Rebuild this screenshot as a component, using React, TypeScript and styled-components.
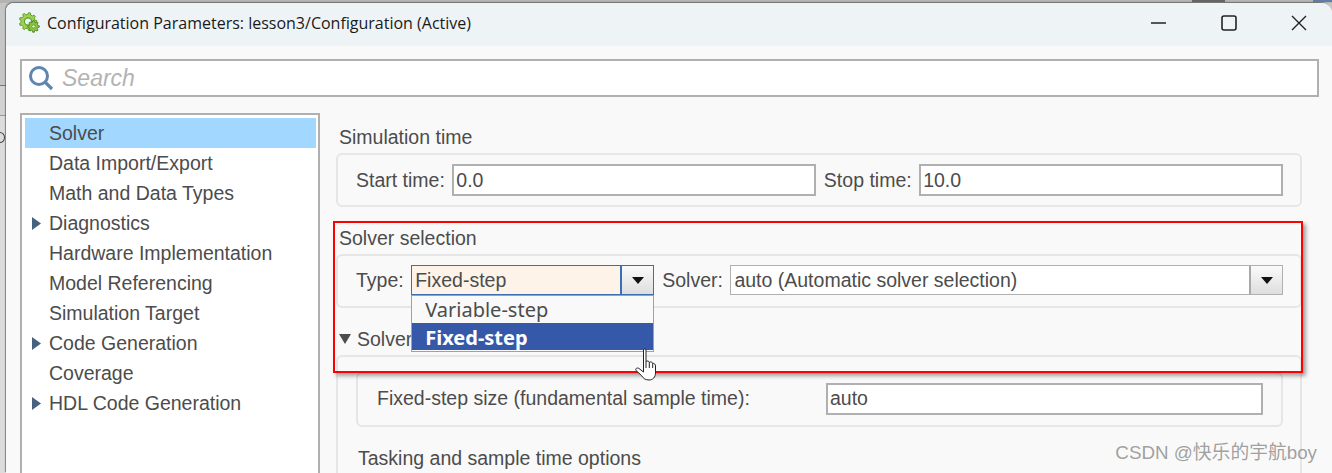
import React from 'react';
import styled, { createGlobalStyle } from 'styled-components';

const Global = createGlobalStyle`
  html, body {
    margin: 0;
    padding: 0;
    height: 473px;
    overflow: hidden;
    background: #c9c9c9;
    font-family: "Liberation Sans", Arial, sans-serif;
  }
`;

const Desktop = styled.div`
  position: relative;
  width: 1332px;
  height: 473px;
  overflow: hidden;
  padding: 3px 0 0 6px;
  box-sizing: border-box;
  background:
    linear-gradient(#666, #666) 1192px 0 / 33px 2px no-repeat,
    linear-gradient(#5f7fa8, #5f7fa8) 1313px 0 / 19px 2px no-repeat,
    linear-gradient(#777, #777) 0 85px / 6px 1px no-repeat,
    linear-gradient(#999, #999) 0 115px / 6px 1px no-repeat,
    linear-gradient(#dcdcdc, #dcdcdc) 0 116px / 6px 357px no-repeat,
    linear-gradient(#d2d2d2, #d2d2d2) 0 86px / 6px 29px no-repeat,
    linear-gradient(#b4b4b4 3px, #c6c6c6 3px);
`;

const BackdropRing = styled.span`
  position: absolute;
  left: -5px;
  top: 132px;
  width: 8px;
  height: 9px;
  border: 1.5px solid #444;
  border-radius: 50%;
`;

const Window = styled.div`
  position: relative;
  height: 470px;
  background: #f9f9f9;
  border-top-left-radius: 8px;
  border-top-right-radius: 10px;
  box-shadow: -1px -1px 1px rgba(70, 70, 70, 0.6);
  overflow: hidden;
`;

const TitleBar = styled.div`
  display: flex;
  align-items: center;
  height: 43px;
  box-sizing: border-box;
  padding: 0 0 4px 13px;
  background: #eef3f6;
`;

const Title = styled.div`
  margin-left: 7px;
  font-family: "Open Sans", sans-serif;
  font-size: 16px;
  color: #1a1a1a;
  flex: 1;
`;

const WinButtons = styled.div`
  display: flex;
  align-items: center;
  margin-right: -2px;
`;

const WinButton = styled.div`
  display: flex;
  justify-content: center;
  align-items: center;
  width: 70px;
  height: 39px;
`;

const Body = styled.div`
  padding: 13px 13px 0 14px;
`;

const SearchBox = styled.div`
  display: flex;
  align-items: center;
  height: 38px;
  box-sizing: border-box;
  border: 2px solid #b0b0b0;
  background: #fff;
  padding-left: 6px;
`;

const SearchText = styled.span`
  margin-left: 8px;
  font-size: 23px;
  font-style: italic;
  color: #b3b3b3;
`;

const Columns = styled.div`
  display: flex;
  margin-top: 16px;
`;

const Tree = styled.div`
  width: 300px;
  height: 400px;
  box-sizing: border-box;
  border: 2px solid #b0b0b0;
  background: #fff;
  padding: 3px;
  flex-shrink: 0;
`;

const TreeRow = styled.div<{ $active?: boolean }>`
  display: flex;
  align-items: center;
  height: 30px;
  width: 291px;
  background: ${(p) => (p.$active ? '#a2d8ff' : 'transparent')};
  font-size: 19.5px;
  color: #4c4c4c;
`;

const Twist = styled.span`
  width: 24px;
  display: flex;
  justify-content: flex-start;
  padding-left: 7px;
  box-sizing: border-box;
  flex-shrink: 0;
`;

const Panel = styled.div`
  margin-left: 16px;
  padding-top: 8px;
  width: 966px;
  font-size: 19.5px;
  color: #4c4c4c;
`;

const SectionLabel = styled.div<{ $top?: number }>`
  height: 32px;
  margin-top: ${(p) => p.$top ?? 0}px;
  display: flex;
  align-items: center;
  padding-left: 3px;
  gap: 6px;
`;

const GroupBox = styled.div<{ $lift?: boolean }>`
  height: 54px;
  box-sizing: border-box;
  border: 2px solid #e6e6e6;
  border-radius: 6px;
  display: flex;
  align-items: center;
  padding: 0 18px ${(p) => (p.$lift ? 2 : 0)}px;
`;

const FieldLabel = styled.span<{ $left?: number }>`
  margin-left: ${(p) => p.$left ?? 0}px;
  margin-right: 7.5px;
  white-space: nowrap;
`;

const TextField = styled.div<{ $w: number }>`
  width: ${(p) => p.$w}px;
  height: 32px;
  box-sizing: border-box;
  border: 2px solid #b0b0b0;
  background: #fff;
  padding-left: 2px;
  display: flex;
  align-items: center;
  flex-shrink: 0;
`;

const Combo = styled.div<{ $w: number; $open?: boolean }>`
  position: relative;
  width: ${(p) => p.$w}px;
  height: 30px;
  box-sizing: border-box;
  border: ${(p) => (p.$open ? '1px solid #3a6fb5' : '1px solid #b0b0b0')};
  background: ${(p) => (p.$open ? '#fdf3e9' : '#fff')};
  display: flex;
  align-items: center;
  padding-left: 3px;
  flex-shrink: 0;
`;

const ComboText = styled.span`
  flex: 1;
`;

const ComboArrow = styled.div<{ $open?: boolean }>`
  width: 33px;
  height: 100%;
  box-sizing: border-box;
  border-left: ${(p) => (p.$open ? '2px solid #3a6fb5' : '2px solid #a8a8a8')};
  background: linear-gradient(#fafafa, #dedede);
  display: flex;
  align-items: center;
  justify-content: center;
`;

const Dropdown = styled.div`
  position: absolute;
  left: -1px;
  top: 29px;
  width: 243px;
  height: 57px;
  box-sizing: border-box;
  border: 1.5px solid #7eaad2;
  background: #f9f9f9;
  font-family: "Noto Sans", sans-serif;
  font-size: 20px;
  z-index: 3;
`;

const DropItem = styled.div<{ $sel?: boolean }>`
  height: 27px;
  line-height: ${(p) => (p.$sel ? 29 : 27)}px;
  padding-left: 13px;
  background: ${(p) => (p.$sel ? '#3558a9' : 'transparent')};
  color: ${(p) => (p.$sel ? '#fff' : '#4c4c4c')};
  font-weight: ${(p) => (p.$sel ? 700 : 400)};
`;

const SolverGroup = styled.div`
  height: 130px;
  box-sizing: border-box;
  border: 2px solid #e6e6e6;
  border-bottom: none;
  border-radius: 6px 6px 0 0;
  padding: 15px 18px 0;
`;

const InnerBox = styled.div`
  height: 55px;
  box-sizing: border-box;
  border: 2px solid #e6e6e6;
  border-radius: 6px;
  display: flex;
  align-items: center;
  padding: 0 0 2px 19px;
  width: 927px;
`;

const InnerLabel = styled.span`
  width: 449px;
  flex-shrink: 0;
`;

const Tasking = styled.div`
  margin: 20px 0 0 2px;
`;

const RedFrame = styled.div`
  position: absolute;
  left: 333px;
  top: 221px;
  width: 970px;
  height: 152px;
  box-sizing: border-box;
  border: 2px solid #ff0000;
  box-shadow: 3px 3px 4px rgba(0, 0, 0, 0.35);
  pointer-events: none;
  z-index: 4;
`;

const Cursor = styled.svg`
  position: absolute;
  left: 635px;
  top: 348px;
  z-index: 5;
`;

const Watermark = styled.div`
  position: absolute;
  right: 15px;
  top: 442px;
  line-height: 22px;
  font-family: "Liberation Sans", "Noto Sans CJK SC", sans-serif;
  font-size: 18.8px;
  color: rgba(120, 120, 120, 0.7);
  z-index: 5;
`;

const Arrow = () => (
  <svg width="12" height="7" viewBox="0 0 12 7">
    <path d="M0 0H12L6 7Z" fill="#111" />
  </svg>
);

const TreeArrow = () => (
  <svg width="9" height="13" viewBox="0 0 9 13">
    <path d="M0 0L9 6.5L0 13Z" fill="#46627f" />
  </svg>
);

// outline of a cog wheel with the given number of teeth
function cog(cx: number, cy: number, outer: number, inner: number, teeth: number) {
  const pts: string[] = [];
  const step = (Math.PI * 2) / teeth;
  for (let i = 0; i < teeth; i++) {
    const a = i * step;
    [
      [a - step * 0.3, inner],
      [a - step * 0.16, outer],
      [a + step * 0.16, outer],
      [a + step * 0.3, inner],
    ].forEach(([t, r]) => {
      pts.push(`${(cx + Math.cos(t) * r).toFixed(2)} ${(cy + Math.sin(t) * r).toFixed(2)}`);
    });
  }
  return `M${pts.join('L')}Z`;
}

const GearIcon = () => (
  <svg width="21" height="21" viewBox="0 0 21 21">
    <path d={cog(9, 9.5, 8.8, 7, 9)} fill="#9ed24e" stroke="#5f9e33" strokeWidth="1" />
    <circle cx="9" cy="9.5" r="3.6" fill="#eef3f6" stroke="#5f9e33" strokeWidth="1.2" />
    <path d={cog(14.5, 14.5, 5.8, 4.4, 8)} fill="#8cc63f" stroke="#4f8f26" strokeWidth="1" />
    <circle cx="14.5" cy="14.5" r="1.7" fill="#e4f0d4" stroke="#4f8f26" strokeWidth=".8" />
  </svg>
);

const items = [
  { name: 'Solver', active: true },
  { name: 'Data Import/Export' },
  { name: 'Math and Data Types' },
  { name: 'Diagnostics', kids: true },
  { name: 'Hardware Implementation' },
  { name: 'Model Referencing' },
  { name: 'Simulation Target' },
  { name: 'Code Generation', kids: true },
  { name: 'Coverage' },
  { name: 'HDL Code Generation', kids: true },
];

export default function App() {
  return (
    <Desktop>
      <Global />
      <BackdropRing />
      <Window>
        <TitleBar>
          <GearIcon />
          <Title>Configuration Parameters: lesson3/Configuration (Active)</Title>
          <WinButtons>
            <WinButton>
              <svg width="16" height="2" viewBox="0 0 16 2">
                <path d="M0 1H15" stroke="#222" strokeWidth="1.3" />
              </svg>
            </WinButton>
            <WinButton>
              <svg width="16" height="16" viewBox="0 0 16 16">
                <rect x="1" y="1" width="14" height="14" rx="2" fill="none" stroke="#222" strokeWidth="1.6" />
              </svg>
            </WinButton>
            <WinButton>
              <svg width="16" height="16" viewBox="0 0 16 16">
                <path d="M1 1L15 15M15 1L1 15" stroke="#222" strokeWidth="1.4" />
              </svg>
            </WinButton>
          </WinButtons>
        </TitleBar>
        <Body>
          <SearchBox>
            <svg width="26" height="26" viewBox="0 0 26 26">
              <circle cx="11" cy="11" r="8.5" fill="none" stroke="#5e86b0" strokeWidth="3" />
              <path d="M17 17L24 24" stroke="#5e86b0" strokeWidth="3.2" />
            </svg>
            <SearchText>Search</SearchText>
          </SearchBox>
          <Columns>
            <Tree>
              {items.map((it) => (
                <TreeRow key={it.name} $active={it.active}>
                  <Twist>{it.kids && <TreeArrow />}</Twist>
                  {it.name}
                </TreeRow>
              ))}
            </Tree>
            <Panel>
              <SectionLabel>Simulation time</SectionLabel>
              <GroupBox>
                <FieldLabel>Start time:</FieldLabel>
                <TextField $w={364}>0.0</TextField>
                <FieldLabel $left={7.5}>Stop time:</FieldLabel>
                <TextField $w={364}>10.0</TextField>
              </GroupBox>
              <SectionLabel $top={15}>Solver selection</SectionLabel>
              <GroupBox $lift>
                <FieldLabel>Type:</FieldLabel>
                <Combo $w={243} $open>
                  <ComboText>Fixed-step</ComboText>
                  <ComboArrow $open>
                    <Arrow />
                  </ComboArrow>
                  <Dropdown>
                    <DropItem>Variable-step</DropItem>
                    <DropItem $sel>Fixed-step</DropItem>
                  </Dropdown>
                </Combo>
                <FieldLabel $left={8}>Solver:</FieldLabel>
                <Combo $w={553}>
                  <ComboText>auto (Automatic solver selection)</ComboText>
                  <ComboArrow>
                    <Arrow />
                  </ComboArrow>
                </Combo>
              </GroupBox>
              <SectionLabel $top={15}>
                <svg width="12" height="10" viewBox="0 0 12 10">
                  <path d="M0 0H12L6 10Z" fill="#4c4c4c" />
                </svg>
                Solver
              </SectionLabel>
              <SolverGroup>
                <InnerBox>
                  <InnerLabel>Fixed-step size (fundamental sample time):</InnerLabel>
                  <TextField $w={437}>auto</TextField>
                </InnerBox>
                <Tasking>Tasking and sample time options</Tasking>
              </SolverGroup>
            </Panel>
          </Columns>
        </Body>
      </Window>
      <RedFrame />
      <Cursor width="24" height="33" viewBox="0 0 24 33">
        <path
          d="M8.5 2C8.5 0.5 11 0.5 11 2V13.5C12.5 12.5 14 13 14.3 14.5C15.5 13.5 17.5 14 17.7 15.5C19 15 20.5 16 20.5 18V25C20.5 29 18 32 14 32C10 32 8 30 6.5 27.5L1 22.5C0 21 2 19 4 20.5L8.5 24Z"
          fill="#fff"
          stroke="#222"
          strokeWidth="1"
        />
        <path d="M11 13.5V20M14.3 14.5V20M17.7 15.5V20" stroke="#222" strokeWidth="1" />
      </Cursor>
      <Watermark>CSDN @快乐的宇航boy</Watermark>
    </Desktop>
  );
}
